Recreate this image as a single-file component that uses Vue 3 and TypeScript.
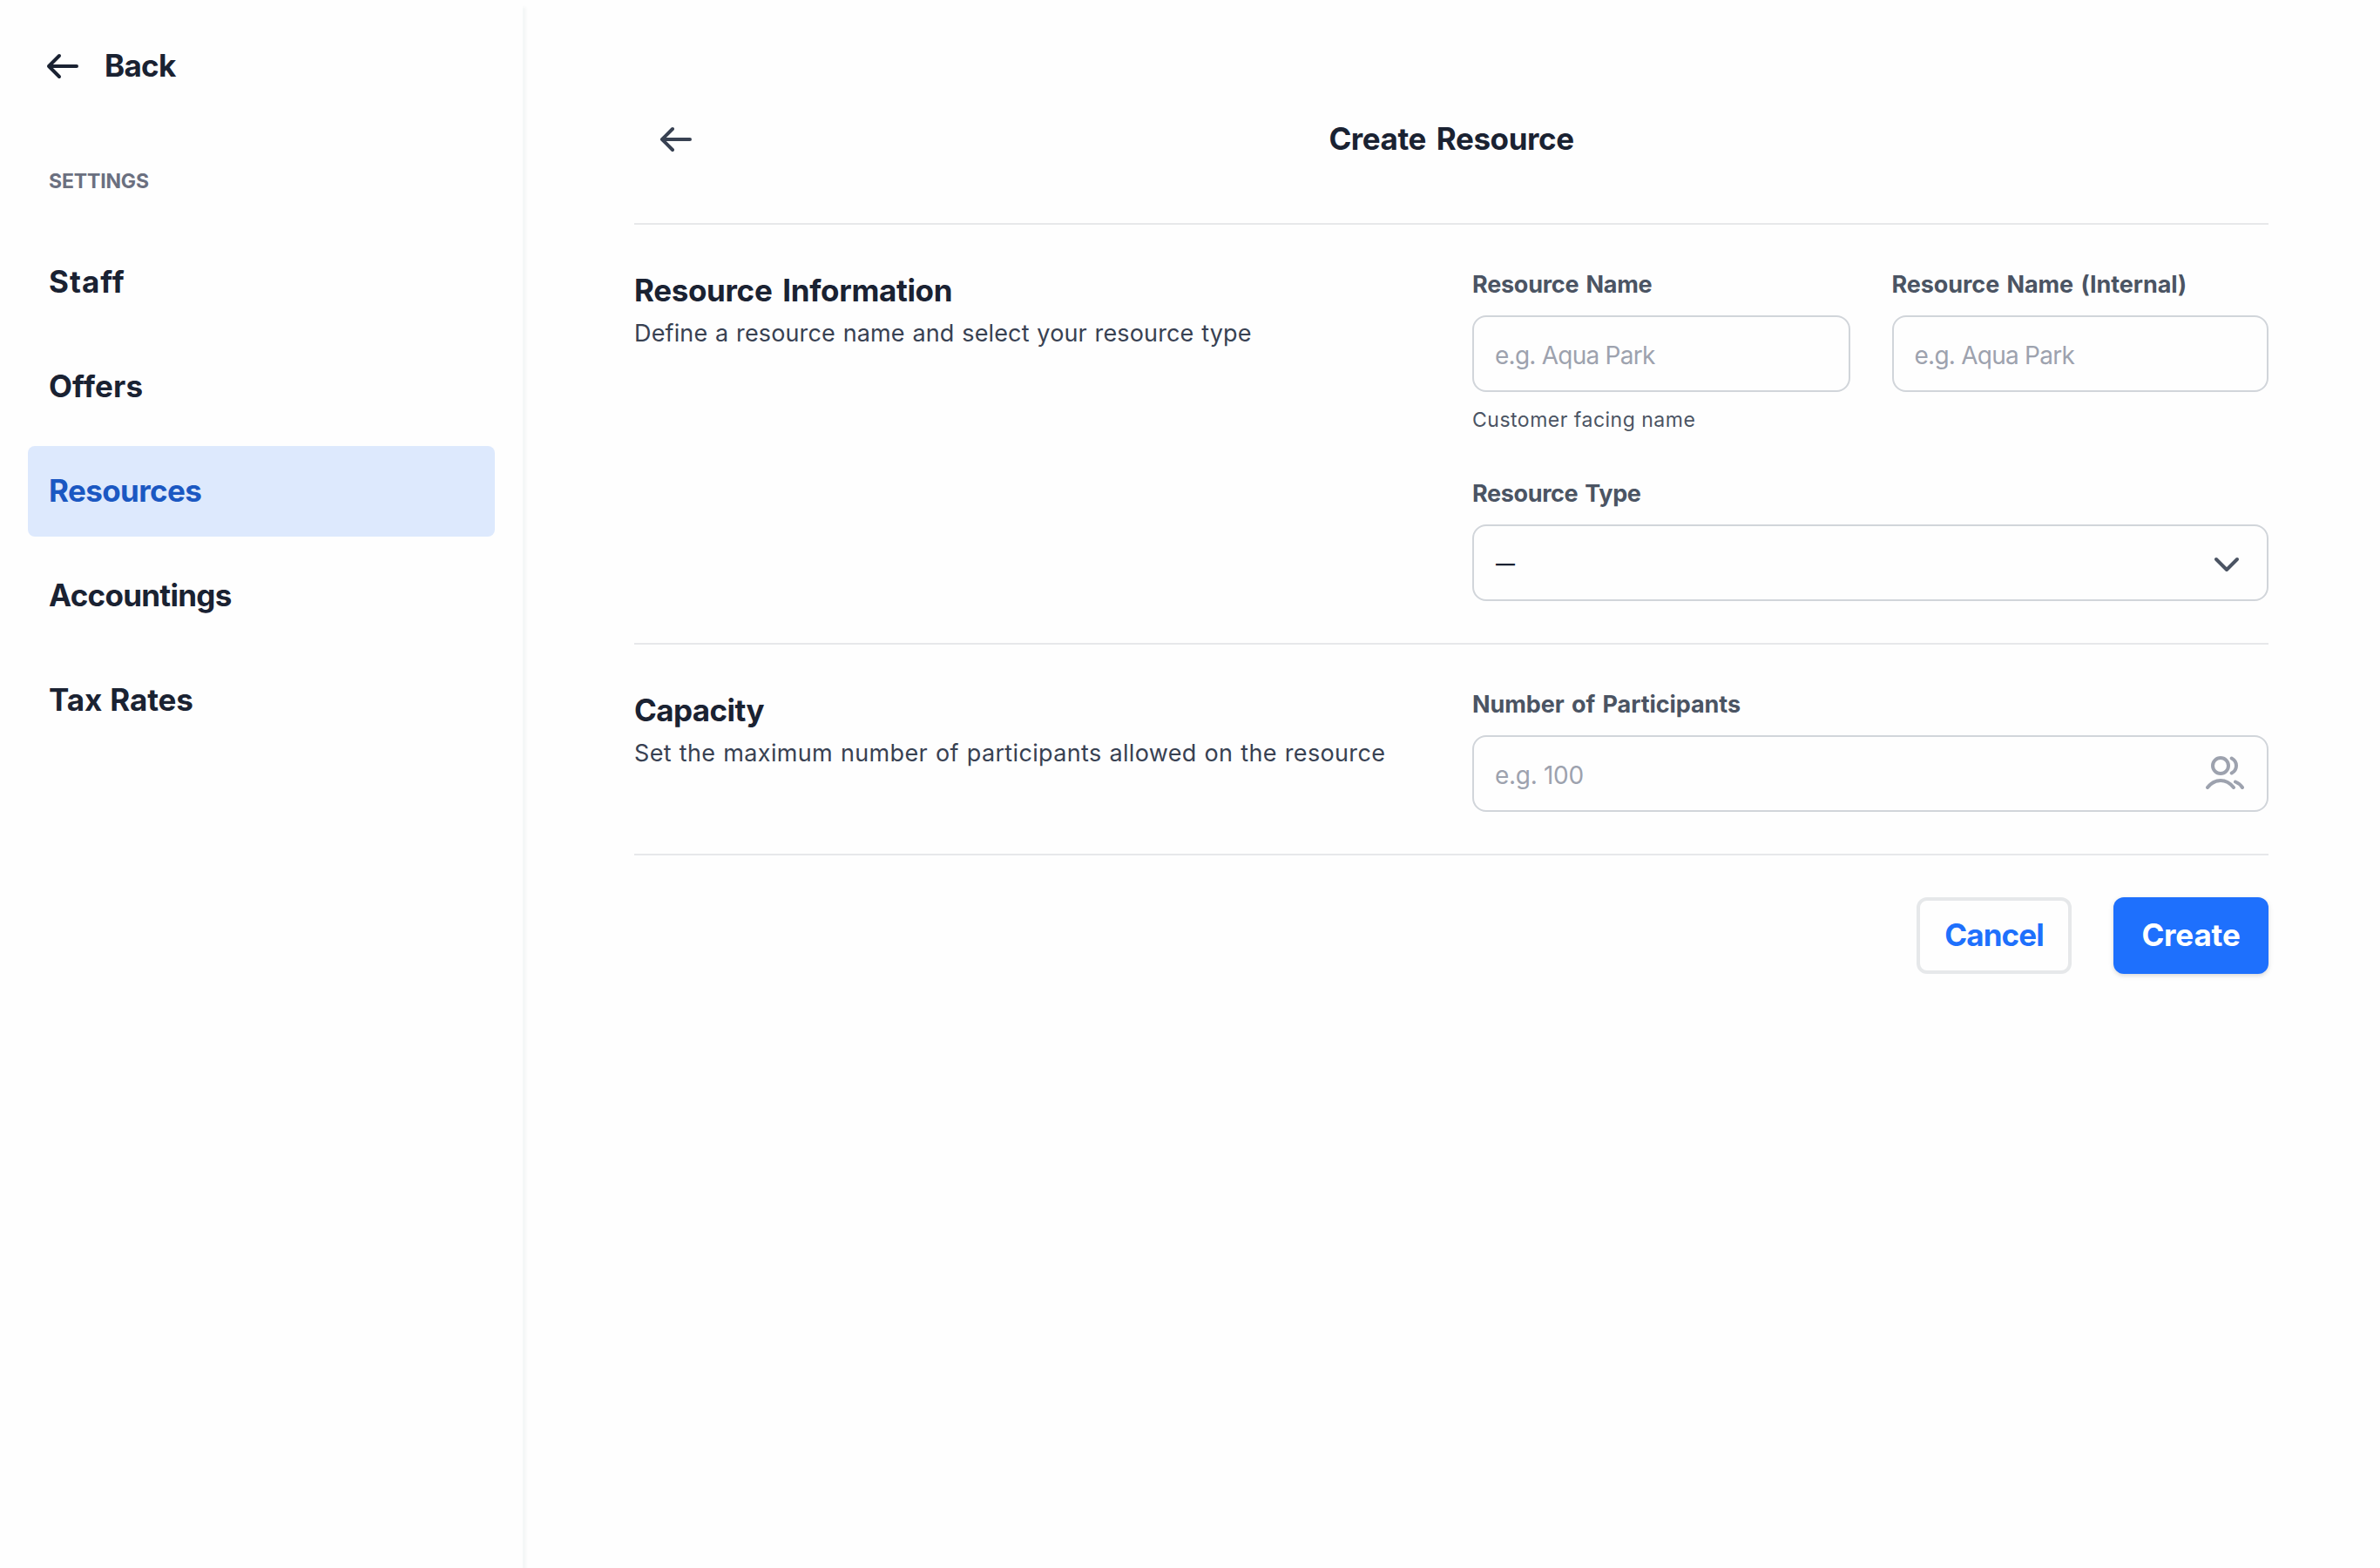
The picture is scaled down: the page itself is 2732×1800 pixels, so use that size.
<script setup lang="ts">
interface NavItem {
  label: string
  kind: string
  active?: boolean
}

const navItems: NavItem[] = [
  { label: 'Staff', kind: 'staff' },
  { label: 'Offers', kind: 'offers' },
  { label: 'Resources', kind: 'resources', active: true },
  { label: 'Accountings', kind: 'accountings' },
  { label: 'Tax Rates', kind: 'tax-rates' },
]
</script>

<template>
  <div class="app">
    <aside class="sidebar">
      <a class="back">
        <svg class="arrow" viewBox="0 0 40 32"><path d="M16 4 4 16l12 12M4 16h32" /></svg>
        <span>Back</span>
      </a>
      <p class="group">SETTINGS</p>
      <nav class="nav">
        <a
          v-for="item in navItems"
          :key="item.label"
          class="nav-item"
          :class="[item.kind, { active: item.active }]"
        >{{ item.label }}</a>
      </nav>
    </aside>

    <main class="main">
      <header class="header">
        <svg class="arrow" viewBox="0 0 40 32"><path d="M16 4 4 16l12 12M4 16h32" /></svg>
        <h1>Create Resource</h1>
      </header>

      <section class="section">
        <div class="intro">
          <h2>Resource Information</h2>
          <p class="define">Define a resource name and select your resource type</p>
        </div>
        <div class="fields">
          <div class="row">
            <div class="field">
              <label>Resource Name</label>
              <input class="control" type="text" placeholder="e.g. Aqua Park" />
              <p class="hint">Customer facing name</p>
            </div>
            <div class="field">
              <label class="internal">Resource Name (Internal)</label>
              <input class="control" type="text" placeholder="e.g. Aqua Park" />
            </div>
          </div>
          <div class="field">
            <label class="type">Resource Type</label>
            <div class="control select">
              <span>—</span>
              <svg class="chevron" viewBox="0 0 32 20"><path d="m4 4 12 12L28 4" /></svg>
            </div>
          </div>
        </div>
      </section>

      <section class="section">
        <div class="intro">
          <h2 class="capacity">Capacity</h2>
          <p class="maximum">Set the maximum number of participants allowed on the resource</p>
        </div>
        <div class="fields">
          <div class="field">
            <label class="participants">Number of Participants</label>
            <div class="control number">
              <input type="text" placeholder="e.g. 100" />
              <svg class="people" viewBox="0 0 48 42">
                <circle cx="19" cy="13" r="9" />
                <path d="M4 38c4-5 9-8 15-8s11 3 15 8M31.700 4.500c3.300 1.800 5.300 4.800 5.300 8.500s-2 6.700-5.300 8.500M36 31.500c3.300 1.300 5.900 3.500 8 6.500" />
              </svg>
            </div>
          </div>
        </div>
      </section>

      <footer class="actions">
        <button class="btn cancel">Cancel</button>
        <button class="btn create">Create</button>
      </footer>
    </main>
  </div>
</template>

<style>
body {
  background: #fff;
}
</style>

<style scoped>
.app {
  display: flex;
  height: 1800px;
  overflow: hidden;
  background: #fefefe;
  color: #1a2232;
  font-family: Inter, "Liberation Sans", sans-serif;
}

h1, h2, p {
  margin: 0;
}

svg {
  display: block;
  flex: none;
  fill: none;
  stroke: currentColor;
  stroke-width: 4;
  stroke-linecap: round;
  stroke-linejoin: round;
}

.arrow {
  width: 40px;
  height: 32px;
}

.sidebar {
  box-sizing: border-box;
  width: 600px;
  flex: none;
  padding: 52px 32px 0;
  box-shadow: 4px 8px 3px #f5f7f7;
}

.back {
  display: flex;
  align-items: center;
  gap: 28px;
  height: 48px;
  padding-left: 20px;
  font-size: 35px;
  font-weight: 700;
  letter-spacing: -0.7px;
}

.back span {
  padding-bottom: 2px;
}

.group {
  margin-top: 92px;
  padding-left: 24px;
  color: #6b7080;
  font-size: 23px;
  font-weight: 700;
  line-height: 32px;
  letter-spacing: -0.15px;
}

.nav {
  display: flex;
  flex-direction: column;
  gap: 16px;
  margin-top: 48px;
  width: 536px;
}

.nav-item {
  padding: 0 0 2px 24px;
  border-radius: 8px;
  font-size: 35px;
  font-weight: 700;
  line-height: 102px;
}

.nav-item.active {
  background: #dde9fd;
  color: #1b58c2;
}

.staff { letter-spacing: 1px; }
.offers { letter-spacing: 0.15px; }
.resources { letter-spacing: -0.6px; }
.accountings { letter-spacing: -0.7px; }
.tax-rates { letter-spacing: -0.1px; word-spacing: 1px; }

.main {
  flex: 1;
  min-width: 0;
  padding: 64px 128px 0;
}

.header {
  display: grid;
  grid-template-columns: 1fr auto 1fr;
  align-items: center;
  height: 192px;
  border-bottom: 2px solid #e7e8ea;
}

.header .arrow {
  margin-left: 28px;
  color: #384152;
}

h1, h2 {
  padding-bottom: 2px;
  font-size: 35px;
  font-weight: 700;
  line-height: 54px;
  word-spacing: 4px;
}

h1 { letter-spacing: -0.42px; }
h2 { letter-spacing: -0.34px; }
h2.capacity { letter-spacing: -0.6px; }

.section {
  display: grid;
  grid-template-columns: 1fr 1fr;
  column-gap: 48px;
  padding: 48px 0;
  border-bottom: 2px solid #e7e8ea;
}

.intro p {
  color: #384152;
  font-size: 27px;
  line-height: 42px;
  white-space: nowrap;
}

.define { letter-spacing: 0.14px; word-spacing: 1px; }
.maximum { letter-spacing: 0.34px; word-spacing: 1px; }

.fields {
  display: flex;
  flex-direction: column;
  gap: 48px;
}

.row {
  display: grid;
  grid-template-columns: 433.5px 1fr;
  column-gap: 48px;
}

.field {
  display: flex;
  flex-direction: column;
  gap: 16px;
  min-width: 0;
}

label {
  padding-top: 2px;
  color: #4b5463;
  font-size: 27px;
  font-weight: 700;
  line-height: 38px;
  letter-spacing: -0.25px;
  word-spacing: 2px;
}

.internal { letter-spacing: -0.08px; }
.type { letter-spacing: -0.37px; }
.participants { letter-spacing: -0.07px; }

.control {
  box-sizing: border-box;
  width: 100%;
  height: 88px;
  padding: 4px 24px 0;
  border: 2px solid #d1d5da;
  border-radius: 16px;
  background: #fefefe;
  outline: 0;
}

input {
  font: 400 28px Inter, "Liberation Sans", sans-serif;
  letter-spacing: -0.75px;
}

input::placeholder {
  color: #9da2ae;
  opacity: 1;
}

.select {
  display: flex;
  align-items: center;
  justify-content: space-between;
  padding: 0 30px 0 25px;
}

.select span {
  padding-top: 1px;
  font-size: 22px;
  font-weight: 600;
  line-height: 32px;
}

.chevron {
  width: 32px;
  height: 20px;
  margin-top: 4px;
  color: #4b5463;
}

.number {
  display: flex;
  align-items: center;
  justify-content: space-between;
  padding: 0 24px;
}

.number input {
  flex: 1;
  min-width: 0;
  height: 84px;
  padding: 4px 0 0;
  border: 0;
  background: none;
  outline: 0;
  letter-spacing: -0.3px;
}

.people {
  width: 48px;
  height: 42px;
  margin-top: -2px;
  color: #9da2ae;
}

.hint {
  color: #4b5463;
  font-size: 23px;
  line-height: 32px;
  letter-spacing: 0.5px;
}

.actions {
  display: flex;
  justify-content: flex-end;
  gap: 48px;
  padding-top: 48px;
}

.btn {
  box-sizing: border-box;
  width: 178px;
  height: 88px;
  padding: 0 0 2px;
  border: 0;
  border-radius: 12px;
  font: 700 35px Inter, "Liberation Sans", sans-serif;
}

.cancel {
  border: 4px solid #e6e8ea;
  background: #fefefe;
  color: #1e70fc;
  letter-spacing: -0.9px;
}

.create {
  background: #1e70fd;
  color: #fff;
  letter-spacing: -0.15px;
  box-shadow: 0 2px 6px rgba(0, 0, 0, 0.1), 0 2px 4px rgba(0, 0, 0, 0.06);
}
</style>
